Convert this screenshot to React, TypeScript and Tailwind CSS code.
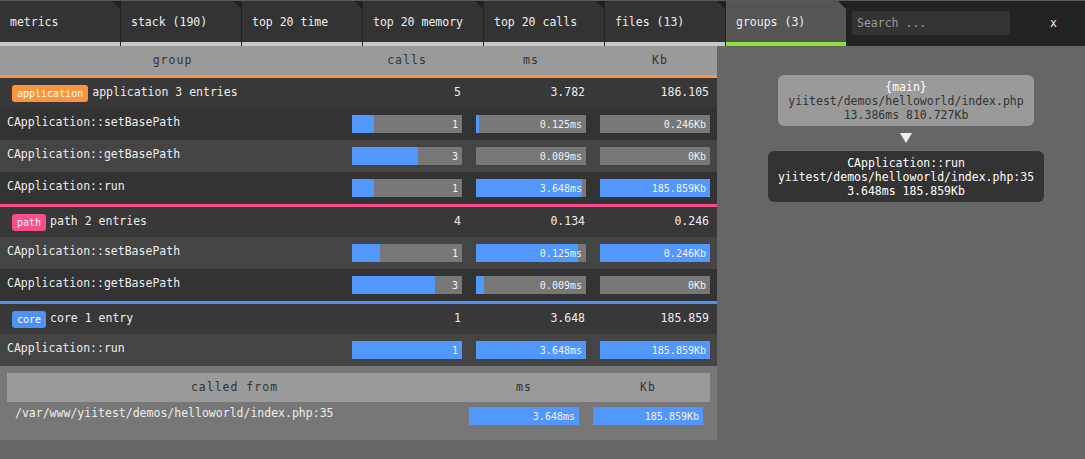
import { type FC } from 'react'

// Dados do painel de grupos
interface Entry {
  name: string
  calls: number
  callsPct: number
  ms: string
  msPct: number
  kb: string
  kbPct: number
}

interface Group {
  tag: string
  label: string
  calls: string
  ms: string
  kb: string
  line: string
  badge: string
  entries: Entry[]
}

const tabs = [
  'metrics',
  'stack (190)',
  'top 20 time',
  'top 20 memory',
  'top 20 calls',
  'files (13)',
]

const groups: Group[] = [
  {
    tag: 'application',
    label: 'application 3 entries',
    calls: '5',
    ms: '3.782',
    kb: '186.105',
    line: 'bg-[#f8953e]',
    badge: 'bg-[#f8953e]',
    entries: [
      { name: 'CApplication::setBasePath', calls: 1, callsPct: 20, ms: '0.125ms', msPct: 3, kb: '0.246Kb', kbPct: 0 },
      { name: 'CApplication::getBasePath', calls: 3, callsPct: 60, ms: '0.009ms', msPct: 0, kb: '0Kb', kbPct: 0 },
      { name: 'CApplication::run', calls: 1, callsPct: 20, ms: '3.648ms', msPct: 96, kb: '185.859Kb', kbPct: 100 },
    ],
  },
  {
    tag: 'path',
    label: 'path 2 entries',
    calls: '4',
    ms: '0.134',
    kb: '0.246',
    line: 'bg-[#f84d8c]',
    badge: 'bg-[#f84d8c]',
    entries: [
      { name: 'CApplication::setBasePath', calls: 1, callsPct: 25, ms: '0.125ms', msPct: 93, kb: '0.246Kb', kbPct: 100 },
      { name: 'CApplication::getBasePath', calls: 3, callsPct: 75, ms: '0.009ms', msPct: 7, kb: '0Kb', kbPct: 0 },
    ],
  },
  {
    tag: 'core',
    label: 'core 1 entry',
    calls: '1',
    ms: '3.648',
    kb: '185.859',
    line: 'bg-[#4f92f6]',
    badge: 'bg-[#4f92f6]',
    entries: [
      { name: 'CApplication::run', calls: 1, callsPct: 100, ms: '3.648ms', msPct: 100, kb: '185.859Kb', kbPct: 100 },
    ],
  },
]

const Bar: FC<{ pct: number; text: string | number }> = ({ pct, text }) => (
  <div className="relative h-[18px] w-[110px] bg-[#777777]">
    <div className="h-full bg-[#5297fb]" style={{ width: `${pct}%` }} />
    <span className="absolute inset-0 flex items-center justify-end pr-[4px] text-[10px] text-[#f2f2f2]">
      {text}
    </span>
  </div>
)

export default function App() {
  let rowIndex = 0

  return (
    <div
      className="flex h-[459px] w-[1085px] flex-col overflow-hidden bg-[#666666] text-[11.5px]"
      style={{ fontFamily: '"DejaVu Sans Mono", monospace' }}
    >
      {/* Barra de abas */}
      <div className="flex h-[46px] shrink-0 border-t border-[#5a5a5a] bg-[#222222]">
        {tabs.map((tab) => (
          <div
            key={tab}
            className="relative mr-px flex w-[120px] items-center border-b-4 border-[#c8c8c8] bg-[#333333] pl-[10px] pt-[2px] text-[#eeeeee]"
          >
            {tab}
            <div className="absolute right-0 top-0 border-l-[8px] border-t-[8px] border-l-transparent border-t-[#202020]" />
          </div>
        ))}
        <div className="relative flex w-[120px] items-center border-b-4 border-[#8fe03c] bg-[#555555] pl-[10px] pt-[2px] text-[#eeeeee]">
          groups (3)
          <div className="absolute right-0 top-0 border-l-[8px] border-t-[8px] border-l-transparent border-t-[#202020]" />
        </div>
        <div className="ml-[6px] mt-[10px] flex h-[24px] w-[158px] items-center rounded-[3px] bg-[#333333] pl-[5px] pt-[1px] text-[#9a9a9a]">
          Search ...
        </div>
        <div className="ml-[40px] flex w-[14px] items-center text-[#eeeeee]">x</div>
      </div>

      <div className="flex flex-1">
        {/* Tabela de grupos */}
        <div className="flex w-[717px] shrink-0 flex-col">
          <div className="flex h-[29px] items-center bg-[#9a9a9a] tracking-[1px] text-[11.5px] text-[#333333]">
            <div className="w-[345px] text-center">group</div>
            <div className="w-[124px] text-center">calls</div>
            <div className="w-[124px] text-center">ms</div>
            <div className="w-[124px] pl-[10px] text-center">Kb</div>
          </div>

          {groups.map((group) => (
            <div key={group.tag}>
              <div className={`h-[3px] ${group.line}`} />
              <div className="flex h-[30px] items-center bg-[#383838] text-[#eeeeee]">
                <div className="flex w-[345px] items-center gap-[4px] pl-[12px]">
                  <span className={`flex h-[17px] items-center rounded-[3px] px-[5px] text-[10px] text-white ${group.badge}`}>
                    {group.tag}
                  </span>
                  {group.label}
                </div>
                <div className="w-[124px] pr-[8px] text-right">{group.calls}</div>
                <div className="w-[124px] pr-[8px] text-right">{group.ms}</div>
                <div className="w-[124px] pr-[8px] text-right">{group.kb}</div>
              </div>
              {group.entries.map((entry) => {
                const dark = rowIndex++ % 2 === 0
                return (
                  <div
                    key={`${group.tag}-${entry.name}`}
                    className={`flex h-[32px] items-center text-[#eeeeee] ${dark ? 'bg-[#333333]' : 'bg-[#444444]'}`}
                  >
                    <div className="w-[345px] pb-[3px] pl-[7px]">{entry.name}</div>
                    <div className="w-[124px] px-[7px]">
                      <Bar pct={entry.callsPct} text={entry.calls} />
                    </div>
                    <div className="w-[124px] px-[7px]">
                      <Bar pct={entry.msPct} text={entry.ms} />
                    </div>
                    <div className="w-[124px] px-[7px]">
                      <Bar pct={entry.kbPct} text={entry.kb} />
                    </div>
                  </div>
                )
              })}
            </div>
          ))}

          {/* Chamado de */}
          <div className="bg-[#777777] px-[7px] pb-[10px] pt-[7px]">
            <div className="flex h-[29px] items-center bg-[#9a9a9a] tracking-[1px] text-[11.5px] text-[#333333]">
              <div className="w-[455px] text-center">called from</div>
              <div className="w-[124px] text-center">ms</div>
              <div className="w-[124px] text-center">Kb</div>
            </div>
            <div className="flex h-[28px] items-center text-[#eeeeee]">
              <div className="w-[455px] pb-[4px] pl-[8px]">/var/www/yiitest/demos/helloworld/index.php:35</div>
              <div className="w-[124px] px-[7px]">
                <Bar pct={100} text="3.648ms" />
              </div>
              <div className="w-[124px] px-[7px]">
                <Bar pct={100} text="185.859Kb" />
              </div>
            </div>
          </div>
        </div>

        {/* Árvore de chamadas */}
        <div className="flex flex-1 flex-col items-center pl-[10px] pt-[29px] leading-[14px]">
          <div className="rounded-[6px] bg-[#9a9a9a] px-[10px] pb-[4px] pt-[5px] text-center text-[#333333]">
            <div className="text-white">{'{main}'}</div>
            <div>yiitest/demos/helloworld/index.php</div>
            <div>13.386ms 810.727Kb</div>
          </div>
          <div className="mb-[8px] mt-[7px] h-0 w-0 border-x-[6px] border-t-[10px] border-x-transparent border-t-[#eeeeee]" />
          <div className="rounded-[6px] bg-[#333333] px-[10px] pb-[4px] pt-[5px] text-center text-white">
            <div>CApplication::run</div>
            <div>yiitest/demos/helloworld/index.php:35</div>
            <div>3.648ms 185.859Kb</div>
          </div>
        </div>
      </div>
    </div>
  )
}
